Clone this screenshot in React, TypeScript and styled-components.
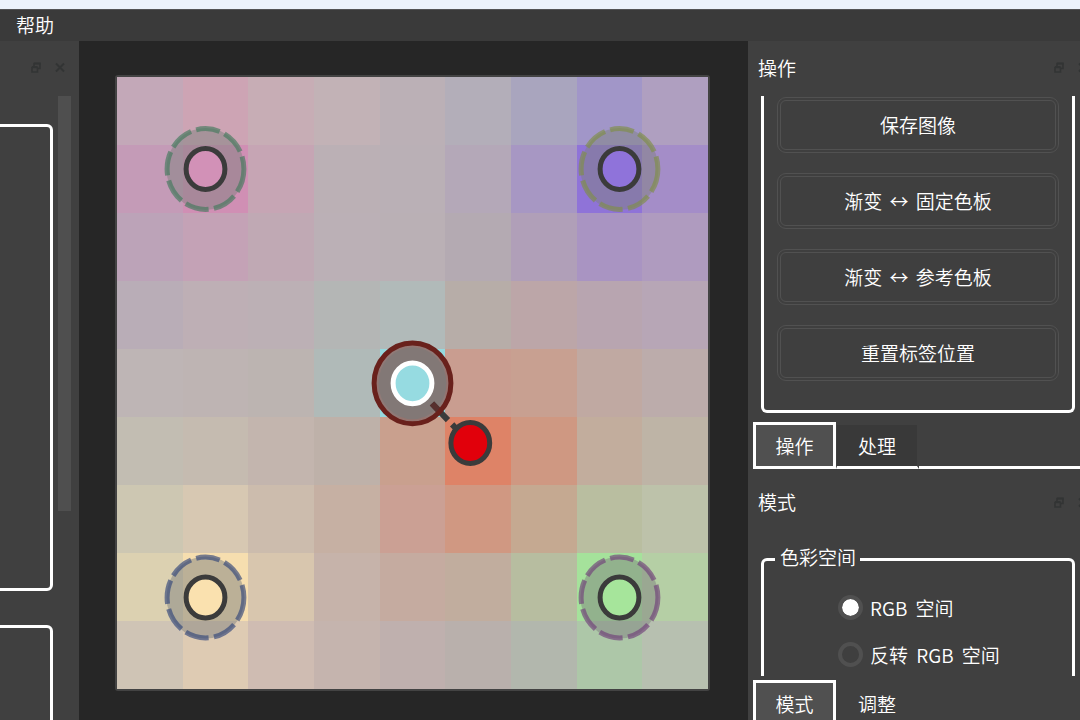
import React from "react";
import styled, { createGlobalStyle } from "styled-components";

const GlobalStyle = createGlobalStyle`
  *, *::before, *::after { box-sizing: border-box; }
  html, body { margin: 0; padding: 0; }
  body, button, input {
    font-family: "Noto Sans CJK SC", "Noto Sans", sans-serif;
    font-size: 19px;
    font-weight: 350;
    line-height: 28px;
    color: #fff;
  }
  body { background: #404040; overflow: hidden; }
`;

const Shell = styled.div`
  display: flex;
  flex-direction: column;
  height: 100vh;
  overflow: hidden;
  background: #404040;
`;

const TitleStrip = styled.div`
  flex: none;
  height: 9px;
  background: #edf3fb;
`;

const MenuBar = styled.nav`
  flex: none;
  display: flex;
  align-items: center;
  height: 32px;
  padding: 0 8px 2px;
  background: #3a3a3a;
  border-top: 1px solid #555;
`;

const MenuItem = styled.button`
  padding: 0 8px;
  border: 0;
  background: transparent;
`;

const Workspace = styled.main`
  flex: 1;
  display: flex;
  min-height: 0;
`;

const LeftDock = styled.aside`
  flex: none;
  width: 79px;
  overflow: hidden;
`;

const RightDock = styled.aside`
  flex: none;
  display: flex;
  flex-direction: column;
  width: 354px;
  margin-right: -22px;
  overflow: hidden;
`;

const DockHeader = styled.header`
  flex: none;
  display: flex;
  align-items: center;
  height: 55px;
  padding: 0 14px 2px 10px;
`;

const DockTitle = styled.h2`
  margin: 0;
  font-size: 19px;
  font-weight: 350;
`;

const DockControls = styled.div`
  display: flex;
  gap: 14px;
  margin-left: auto;
`;

const IconButton = styled.button`
  display: flex;
  padding: 0;
  border: 0;
  background: transparent;
  color: #323434;
`;

const LeftScroll = styled.div`
  display: flex;
  align-items: flex-start;
  gap: 5px;
`;

const GroupStack = styled.div`
  flex: 1;
  display: flex;
  flex-direction: column;
  gap: 34px;
  margin-left: -10px;
  padding-top: 28px;
`;

const EmptyGroup = styled.section`
  height: 467px;
  border: 3px solid #fff;
  border-radius: 6px;
`;

const ScrollThumb = styled.div`
  width: 13px;
  height: 415px;
  margin-right: 8px;
  background: #4f4f4f;
`;

const Stage = styled.section`
  flex: 1;
  display: flex;
  min-width: 0;
  padding: 34px 38px 29px 36px;
  background: #262626;
`;

const Board = styled.div`
  position: relative;
  flex: 1;
  display: grid;
  border: 2px solid #434343;
  border-radius: 3px;
`;

const CellGrid = styled.div`
  display: grid;
  grid-template-columns: repeat(9, 1fr);
  grid-template-rows: repeat(9, 1fr);
`;

const Cell = styled.div<{ $color: string }>`
  background: ${(p) => p.$color};
`;

const HandleLayer = styled.svg`
  position: absolute;
  inset: 0;
  width: 100%;
  height: 100%;
`;

const ActionViewport = styled.div`
  flex: none;
  padding: 0 27px 0 13px;
`;

const ActionGroup = styled.section`
  display: flex;
  flex-direction: column;
  gap: 20px;
  padding: 1px 13px 29px;
  border: solid #fff;
  border-width: 0 3px 3px;
  border-radius: 0 0 6px 6px;
`;

const ActionButton = styled.button`
  height: 56px;
  border: 4px double #515151;
  border-radius: 9px;
  background: #3f3f3f;
`;

const Arrow = styled.span`
  padding: 0 3px;
`;

const TabBar = styled.div`
  flex: none;
  display: flex;
  height: 47px;
  margin: 9px 0 0 5px;
`;

const Tab = styled.button<{ $active?: boolean; $shaded?: boolean }>`
  flex: none;
  width: 83px;
  padding: 0;
  border: ${(p) => (p.$active ? "3px solid #fff" : "solid transparent")};
  border-width: ${(p) => (p.$active ? "3px" : "3px 2px 3px 1px")};
  border-bottom-color: #fff;
  background: ${(p) => (p.$active ? "#505050" : p.$shaded ? "#393939" : "transparent")};
  background-clip: padding-box;
`;

const TabRule = styled.div`
  flex: 1;
  border-bottom: 3px solid #fff;
`;

const ModeHeader = styled(DockHeader)`
  height: 66px;
  padding-bottom: 0;
`;

const ModeViewport = styled.div`
  flex: none;
  height: 141px;
  padding: 8px 27px 0 13px;
  overflow: hidden;
`;

const ModeGroup = styled.fieldset`
  display: flex;
  flex-direction: column;
  height: 240px;
  margin: 0;
  padding: 9px 0 0 74px;
  border: 3px solid #fff;
  border-radius: 6px;
`;

const GroupLegend = styled.legend`
  margin-left: -63px;
  padding: 0 4px 4px 5px;
  line-height: 28px;
`;

const RadioRow = styled.label`
  flex: none;
  display: flex;
  align-items: center;
  gap: 7px;
  height: 47px;
`;

const Radio = styled.input`
  appearance: none;
  width: 25px;
  height: 25px;
  margin: 0;
  border: 4px solid #505050;
  border-radius: 50%;
  background: #3f3f3f;
  &:checked { background: #fff; background-clip: padding-box; }
`;

const Latin = styled.span<{ $inner?: boolean }>`
  padding: 0 4px 0 ${(p) => (p.$inner ? 4 : 0)}px;
`;

const ModeTabs = styled(TabBar)`
  margin-top: 4px;
`;

const FloatIcon = () => (
  <svg width="10" height="11" viewBox="0 0 10 11" fill="none" stroke="currentColor" aria-hidden="true">
    <path d="M3 4V1.5H9V6.5H7" strokeWidth="1.6" />
    <path d="M3 1.5H9.5" strokeWidth="2" />
    <path d="M1 5.5H6.5V10H1Z" strokeWidth="1.6" />
    <path d="M1 5H6.5" strokeWidth="2" />
  </svg>
);

const CloseIcon = () => (
  <svg width="10" height="11" viewBox="0 0 10 11" fill="none" stroke="currentColor" strokeWidth="2" aria-hidden="true">
    <path d="M1 1.5L9 9.5M9 1.5L1 9.5" />
  </svg>
);

const WindowControls = () => (
  <DockControls>
    <IconButton type="button" aria-label="浮动"><FloatIcon /></IconButton>
    <IconButton type="button" aria-label="关闭"><CloseIcon /></IconButton>
  </DockControls>
);

const cells: string[][] = [
  ["#c3a8b8", "#cda4b4", "#c7adb5", "#c2b2b6", "#bbb0b6", "#b3aeb9", "#a9a5be", "#a196c8", "#af9fc0"],
  ["#c49bb7", "#d08fb4", "#c6a5b4", "#bbb0b5", "#bab0b6", "#b4a8b8", "#a797c3", "#8f73d8", "#a48dc8"],
  ["#bca3b8", "#c4a2b6", "#c0a9b4", "#bbb0b6", "#bab0b5", "#b4aab2", "#b09fb8", "#a994c2", "#af9bbf"],
  ["#b9adb7", "#beafb5", "#bcb0b5", "#b4b6b5", "#b1bab9", "#b7ada8", "#bca6a8", "#b8a5b0", "#b7a6b6"],
  ["#beb5b5", "#beb4b3", "#bcb4b1", "#b0bab8", "#96d9de", "#c99d90", "#c8a091", "#c0a9a2", "#bcacab"],
  ["#c2bdb2", "#c5bbb0", "#c3b5ae", "#beb1a9", "#c9a08e", "#de8367", "#cf9882", "#c2ad9d", "#beb4a6"],
  ["#cdc7b2", "#d7c8b2", "#ccbcad", "#c6b0a3", "#cba094", "#d09882", "#c5a991", "#b9bea0", "#bdc2aa"],
  ["#dcd1b1", "#f6deaf", "#d8c6ae", "#c6b3aa", "#c5aba0", "#c1ad9e", "#b7bda0", "#a5e29b", "#b5cfa5"],
  ["#cfc4b5", "#decbb3", "#cfbcb2", "#c5b4ae", "#bfb0ae", "#b9b0ac", "#b2b7ad", "#adc7a8", "#b7c0b0"],
];

const anchors = [
  { x: 88.5, y: 92, fill: "#d291b7", ring: "#40785a" },
  { x: 502.5, y: 92, fill: "#8f73da", ring: "#7f8f45" },
  { x: 88.5, y: 520.5, fill: "#fae1af", ring: "#2f4478" },
  { x: 502.5, y: 520.5, fill: "#a6e59b", ring: "#6f3d78" },
];

const Handles = () => (
  <HandleLayer viewBox="0 0 591 612" preserveAspectRatio="none" strokeWidth="5" aria-hidden="true">
    {anchors.map((a) => (
      <g key={a.fill}>
        <ellipse cx={a.x} cy={a.y} rx="39" ry="41" fill="#808280" fillOpacity=".5" />
        <ellipse
          cx={a.x} cy={a.y} rx="38.4" ry="40.4" fill="none"
          stroke={a.ring} strokeOpacity=".64" pathLength={360} strokeDasharray="34.9 7.8"
        />
        <ellipse cx={a.x} cy={a.y} rx="19.4" ry="20.4" fill={a.fill} stroke="#3b3b3b" />
      </g>
    ))}
    <ellipse cx="295.5" cy="306.3" rx="38.4" ry="40.4" fill="#8f6f6b" fillOpacity=".9" />
    <ellipse cx="295.5" cy="306.3" rx="34" ry="36" fill="#827876" />
    <path d="M315 326.5L341 353.5" stroke="#3b3b3b" strokeWidth="6" strokeDasharray="23 6" />
    <path d="M315 326.5L323 335" stroke="#57302e" strokeWidth="6" />
    <ellipse cx="295.5" cy="306.3" rx="38.4" ry="40.4" fill="none" stroke="#69211c" />
    <ellipse cx="295.5" cy="306.3" rx="19.4" ry="20.4" fill="#96dbe1" stroke="#fff" />
    <ellipse cx="353.3" cy="366" rx="19.4" ry="20.4" fill="#e1000b" stroke="#3b3b3b" />
  </HandleLayer>
);

export default function App() {
  return (
    <>
      <GlobalStyle />
      <Shell>
        <TitleStrip />
        <MenuBar>
          <MenuItem type="button">帮助</MenuItem>
        </MenuBar>
        <Workspace>
          <LeftDock>
            <DockHeader><WindowControls /></DockHeader>
            <LeftScroll>
              <GroupStack>
                <EmptyGroup />
                <EmptyGroup />
              </GroupStack>
              <ScrollThumb />
            </LeftScroll>
          </LeftDock>
          <Stage>
            <Board>
              <CellGrid>
                {cells.flatMap((row, r) => row.map((color, c) => <Cell key={`${r}-${c}`} $color={color} />))}
              </CellGrid>
              <Handles />
            </Board>
          </Stage>
          <RightDock>
            <DockHeader>
              <DockTitle>操作</DockTitle>
              <WindowControls />
            </DockHeader>
            <ActionViewport>
              <ActionGroup>
                <ActionButton type="button">保存图像</ActionButton>
                <ActionButton type="button">渐变 <Arrow>↔</Arrow> 固定色板</ActionButton>
                <ActionButton type="button">渐变 <Arrow>↔</Arrow> 参考色板</ActionButton>
                <ActionButton type="button">重置标签位置</ActionButton>
              </ActionGroup>
            </ActionViewport>
            <TabBar role="tablist">
              <Tab type="button" role="tab" aria-selected="true" $active>操作</Tab>
              <Tab type="button" role="tab" aria-selected="false" $shaded>处理</Tab>
              <TabRule />
            </TabBar>
            <ModeHeader>
              <DockTitle>模式</DockTitle>
              <WindowControls />
            </ModeHeader>
            <ModeViewport>
              <ModeGroup>
                <GroupLegend>色彩空间</GroupLegend>
                <RadioRow>
                  <Radio type="radio" name="space" defaultChecked />
                  <span><Latin>RGB</Latin> 空间</span>
                </RadioRow>
                <RadioRow>
                  <Radio type="radio" name="space" />
                  <span>反转 <Latin $inner>RGB</Latin> 空间</span>
                </RadioRow>
              </ModeGroup>
            </ModeViewport>
            <ModeTabs role="tablist">
              <Tab type="button" role="tab" aria-selected="true" $active>模式</Tab>
              <Tab type="button" role="tab" aria-selected="false">调整</Tab>
              <TabRule />
            </ModeTabs>
          </RightDock>
        </Workspace>
      </Shell>
    </>
  );
}
